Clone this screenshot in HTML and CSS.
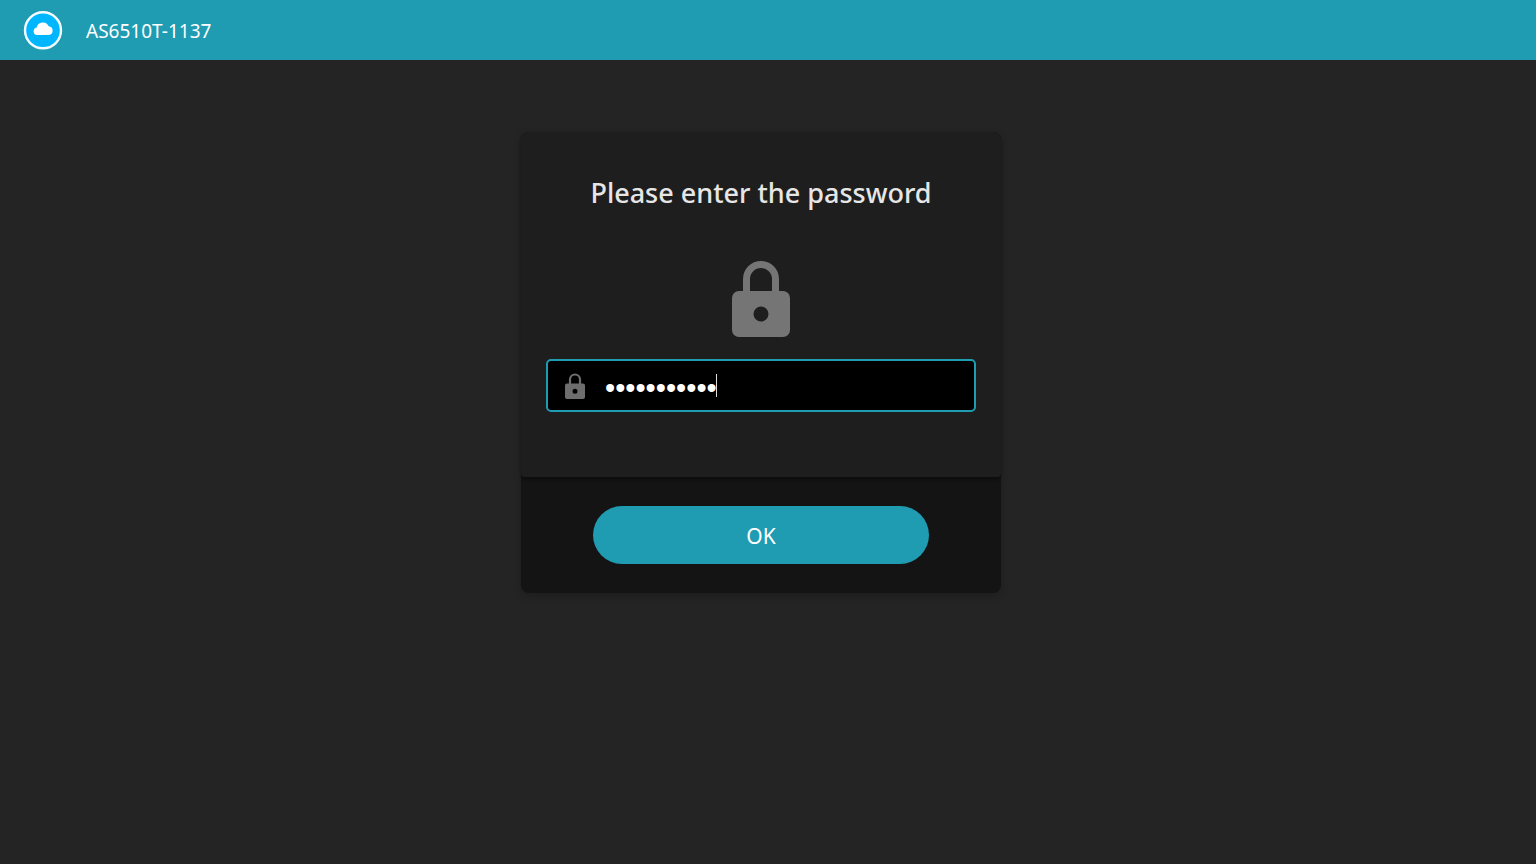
FILE: index.html
```html
<!DOCTYPE html>
<html lang="en">
<head>
    <meta charset="UTF-8">
    <meta name="viewport" content="width=device-width, initial-scale=1.0">
    <title>AS6510T-1137</title>
    <link rel="stylesheet" href="styles.css">
</head>
<body>
    <header class="header">
        <svg class="logo" viewBox="0 0 40 40" aria-hidden="true">
            <circle cx="20" cy="20.300" r="18" fill="#00b7ff" stroke="#f4fcff" stroke-width="2.400"/>
            <path d="M14 25a3.800 3.800 0 0 1-.3-7.500 6.300 6.300 0 0 1 12-1.200A4.400 4.400 0 0 1 26 25z" fill="#fff"/>
        </svg>
        <span class="device-name">AS6510T-1137</span>
    </header>
    <main class="main">
        <form class="card">
            <div class="card-body">
                <h1>Please enter the password</h1>
                <svg class="lock" viewBox="0 0 58 76" aria-hidden="true">
                    <path d="M14.500 32V18a14.500 14.500 0 0 1 29 0v14" fill="none" stroke="#757575" stroke-width="7"/>
                    <path fill-rule="evenodd" d="M7 30h44a7 7 0 0 1 7 7v32a7 7 0 0 1-7 7H7a7 7 0 0 1-7-7V37a7 7 0 0 1 7-7zM29 45.500a7.500 7.500 0 1 0 0 15 7.500 7.500 0 0 0 0-15z" fill="#757575"/>
                </svg>
                <label class="field">
                    <svg class="field-icon" viewBox="0 0 20 26" aria-hidden="true">
                        <path d="M5 11V6.500a5 5 0 0 1 10 0V11" fill="none" stroke="#6e6e6e" stroke-width="2.200"/>
                        <path fill-rule="evenodd" d="M2 10.500h16a2 2 0 0 1 2 2V24a2 2 0 0 1-2 2H2a2 2 0 0 1-2-2V12.500a2 2 0 0 1 2-2zM10 15.700a2.500 2.500 0 1 0 0 5 2.500 2.500 0 0 0 0-5z" fill="#6e6e6e"/>
                    </svg>
                    <input type="password" name="password" value="password123" aria-label="Password" autofocus>
                </label>
            </div>
            <div class="card-footer">
                <button type="submit">OK</button>
            </div>
        </form>
    </main>
    <script>
        var input = document.querySelector('.field input');
        input.focus();
        input.setSelectionRange(input.value.length, input.value.length);
    </script>
</body>
</html>
```
FILE: styles.css
```css
* {
    margin: 0;
    padding: 0;
    box-sizing: border-box;
}
body {
    min-height: 100vh;
    background-color: #242424;
    color: #e6e6e6;
    font-family: "Segoe UI", "Noto Sans", sans-serif;
}
.header {
    display: flex;
    align-items: center;
    gap: 23px;
    height: 60px;
    padding: 0 23px;
    background-color: #209cb2;
}
.logo {
    width: 40px;
    height: 40px;
}
.device-name {
    padding-top: 2px;
    color: #fff;
    font-size: 19px;
}
.main {
    display: flex;
    justify-content: center;
    padding: 72px 14px 40px 0;
}
.card {
    width: 100%;
    max-width: 480px;
    border-radius: 8px;
    background-color: #141414;
    box-shadow: 0 3px 8px rgba(0, 0, 0, 0.2);
}
.card-body {
    display: flex;
    flex-direction: column;
    align-items: center;
    padding: 41px 25px 65px;
    border-radius: 8px 8px 4px 4px;
    background-color: #1e1e1e;
    box-shadow: 0 3px 3px rgba(0, 0, 0, 0.3);
}
h1 {
    font-size: 27px;
    font-weight: 500;
    line-height: 40px;
}
.lock {
    width: 58px;
    height: 76px;
    margin: 48px 0 22px;
}
.field {
    position: relative;
    display: flex;
    align-items: center;
    gap: 20px;
    width: 100%;
    height: 53px;
    padding: 0 17px;
    border: 2px solid #209cb2;
    border-radius: 5px;
    background-color: #000;
}
/* text cursor after the last dot */
.field::after {
    content: "";
    position: absolute;
    top: 13px;
    left: 168px;
    width: 1px;
    height: 23px;
    background-color: #ddd;
}
.field-icon {
    width: 20px;
    height: 26px;
}
.field input {
    flex: 1;
    min-width: 0;
    height: 48px;
    padding-top: 6px;
    border: 0;
    outline: 0;
    background-color: transparent;
    color: #fff;
    caret-color: transparent;
    font-family: "Liberation Sans", Arial, sans-serif;
    font-size: 29px;
}
.card-footer {
    padding: 29px 72px;
}
button {
    display: block;
    width: 100%;
    height: 58px;
    padding-top: 2px;
    border: 0;
    border-radius: 29px;
    background-color: #209cb2;
    color: #fff;
    font-family: inherit;
    font-size: 21px;
    cursor: pointer;
}
```
